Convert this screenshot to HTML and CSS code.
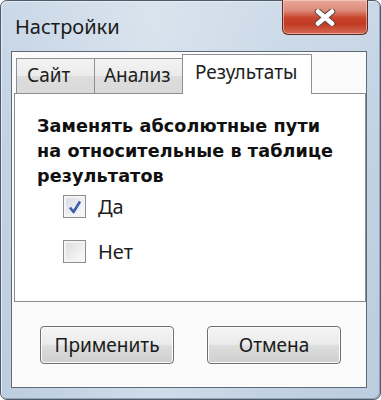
FILE: index.html
```html
<!DOCTYPE html>
<html lang="ru">
<head>
<meta charset="utf-8">
<title>Настройки</title>
<link rel="stylesheet" href="styles.css">
</head>
<body>
<div class="window">
  <div class="titlebar">
    <span class="title">Настройки</span>
    <div class="close">
      <svg width="24" height="17" viewBox="0 0 24 17">
        <path d="M5 2.5 L19 14.5 M19 2.5 L5 14.5" stroke="#5a4a48" stroke-width="6.5" stroke-linecap="round"/>
        <path d="M5 2.5 L19 14.5 M19 2.5 L5 14.5" stroke="#ffffff" stroke-width="4.5" stroke-linecap="round"/>
      </svg>
    </div>
  </div>
  <div class="client">
    <div class="tabs">
      <div class="tab tab-site">Сайт</div>
      <div class="tab tab-analysis">Анализ</div>
      <div class="tab tab-results active">Результаты</div>
    </div>
    <div class="page">
      <p class="caption">Заменять абсолютные пути<br>на относительные в таблице<br>результатов</p>
      <div class="options">
        <label class="check">
          <span class="box checked">
            <svg width="16" height="16" viewBox="0 0 16 16"><path d="M3 8.5 L6.5 13 L13 2.5" fill="none" stroke="#3d5ea8" stroke-width="2.6" stroke-linejoin="round"/></svg>
          </span>
          <span class="label">Да</span>
        </label>
        <label class="check">
          <span class="box"></span>
          <span class="label">Нет</span>
        </label>
      </div>
    </div>
    <div class="buttons">
      <button class="btn">Применить</button>
      <button class="btn">Отмена</button>
    </div>
  </div>
</div>
</body>
</html>
```
FILE: styles.css
```css
html, body {
  margin: 0;
  padding: 0;
  background: #ffffff;
}
.window {
  box-sizing: border-box;
  width: 381px;
  height: 400px;
  border: 1px solid #4c5a69;
  border-radius: 7px;
  padding: 0 13px 11px 10px;
  background:
    linear-gradient(90deg, rgba(255,255,255,0) 0%, rgba(255,255,255,0.3) 40%, rgba(255,255,255,0.1) 70%, rgba(255,255,255,0) 100%),
    linear-gradient(180deg, #cad8e7 0%, #c2d2e3 40%, #bccde0 100%);
  box-shadow: inset 1px 1px 0 #e4edf6, inset -1px -1px 0 #93a5b8;
  font-family: "Noto Sans", "Open Sans", sans-serif;
  color: #1e1e1e;
}
.titlebar {
  height: 50px;
  display: flex;
  justify-content: space-between;
  align-items: flex-start;
}
.title {
  margin: 13px 0 0 4px;
  font-size: 20px;
  line-height: 26px;
  color: #1a1a1a;
}
.close {
  box-sizing: border-box;
  width: 86px;
  height: 35px;
  margin-top: -1px;
  margin-right: -1px;
  border: 1px solid #5b2a24;
  border-top: none;
  border-radius: 0 0 6px 6px;
  background: linear-gradient(180deg, #e9a899 0%, #dc8c7c 30%, #c9452d 52%, #c23a22 70%, #d46a55 100%);
  box-shadow: inset 0 0 0 1px rgba(255,220,210,0.55);
  display: flex;
  align-items: center;
  justify-content: center;
}
.client {
  box-sizing: border-box;
  height: 337px;
  border: 1px solid #5e6a78;
  background: #fbfbfb;
  display: flex;
  flex-direction: column;
}
.tabs {
  display: flex;
  align-items: flex-end;
  height: 40px;
  margin: 1px 0 0 4px;
  position: relative;
  z-index: 1;
}
.tab {
  box-sizing: border-box;
  height: 35px;
  border: 1px solid #8d9096;
  border-bottom: none;
  background: linear-gradient(180deg, #f3f3f3 0%, #ebebeb 50%, #dddddd 51%, #d9d9d9 100%);
  font-size: 19px;
  line-height: 32px;
  padding-left: 10px;
  color: #1e1e1e;
}
.tab-site { width: 79px; }
.tab-analysis { width: 89px; margin-left: -1px; padding-left: 9px; }
.tab-results { width: 130px; margin-left: -1px; }
.tab.active {
  height: 40px;
  margin-bottom: -1px;
  background: #ffffff;
  padding-left: 12px;
  line-height: 34px;
}
.page {
  box-sizing: border-box;
  height: 209px;
  margin: 0 0 0 2px;
  border: 1px solid #8a8d94;
  background: #ffffff;
  padding: 20px 4px 0 22px;
}
.caption {
  margin: 0;
  font-family: "DejaVu Sans", "Liberation Sans", sans-serif;
  font-weight: bold;
  font-size: 17.6px;
  line-height: 25px;
  letter-spacing: 0.1px;
  color: #101010;
  white-space: nowrap;
}
.options {
  display: flex;
  flex-direction: column;
  gap: 22px;
  margin: 6px 0 0 26px;
}
.check {
  display: flex;
  align-items: center;
  height: 23px;
}
.box {
  box-sizing: border-box;
  width: 23px;
  height: 23px;
  border: 1px solid #8e8f8f;
  background: linear-gradient(135deg, #d9d9d9 0%, #f0f0f0 60%, #fbfbfb 100%);
  box-shadow: inset 0 0 0 2px #f4f4f4;
  display: flex;
  align-items: center;
  justify-content: center;
}
.box.checked {
  background: linear-gradient(135deg, #d4d9e0 0%, #eef1f5 60%, #fafbfc 100%);
}
.label {
  margin-left: 12px;
  font-size: 20px;
  line-height: 23px;
  color: #1e1e1e;
}
.buttons {
  display: flex;
  gap: 33px;
  padding: 24px 0 0 28px;
}
.btn {
  box-sizing: border-box;
  width: 134px;
  height: 38px;
  border: 1px solid #707070;
  border-radius: 4px;
  background: linear-gradient(180deg, #f4f4f4 0%, #ebebeb 48%, #dddddd 52%, #cfcfcf 100%);
  box-shadow: inset 0 0 0 1px #fbfbfb;
  font-family: "Noto Sans", "Open Sans", sans-serif;
  font-size: 19px;
  color: #1a1a1a;
  padding: 0;
  line-height: 34px;
}
```
